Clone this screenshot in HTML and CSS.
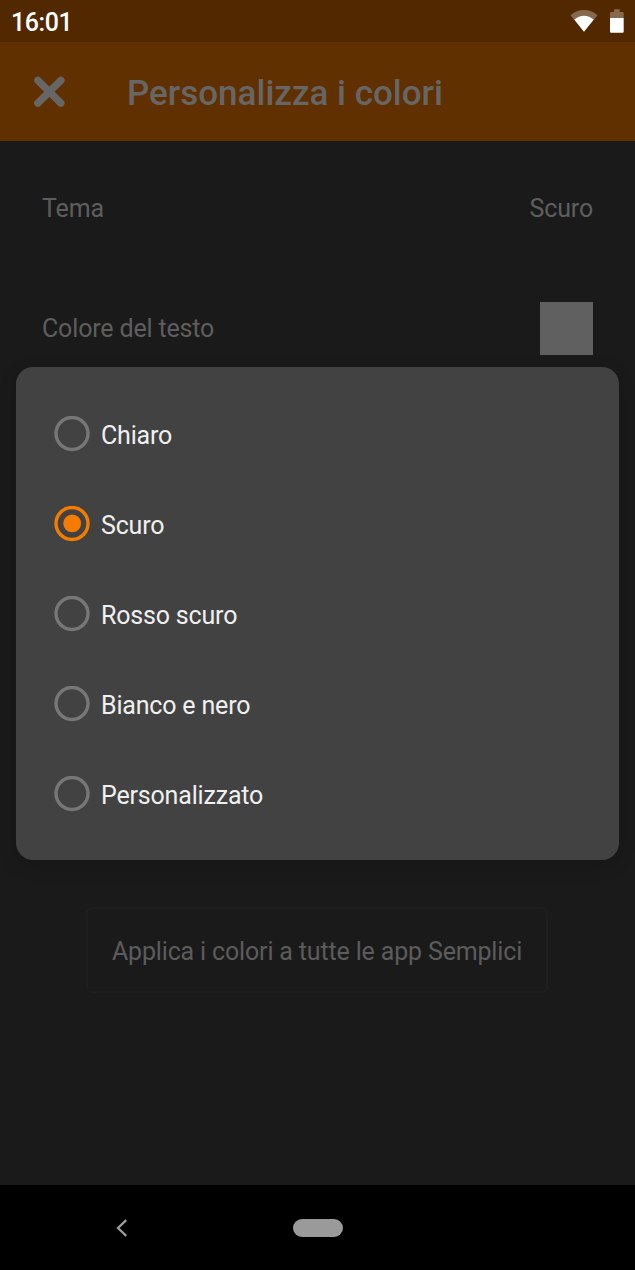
FILE: index.html
```html
<!DOCTYPE html>
<html lang="it">
<head>
<meta charset="utf-8">
<title>Personalizza i colori</title>
<link rel="stylesheet" href="styles.css">
</head>
<body>
<div class="screen">
  <header class="status-bar">
    <span class="clock">16:01</span>
    <div class="status-icons">
      <svg class="wifi" width="28" height="22" viewBox="0 0 28 22">
        <path d="M.5 5.200C8.200-1.700 19.800-1.700 27.500 5.200L14 21.700Z" fill="#fff" fill-opacity=".3"/>
        <path d="M4.300 9.600C10 4.400 18 4.400 23.700 9.600L14 21.700Z" fill="#fff"/>
      </svg>
      <svg class="battery" width="14" height="24" viewBox="0 0 14 24">
        <path d="M0 9V4.200Q0 3 1.200 3H4V.3H9.700V3H12.500Q13.700 3 13.700 4.200V9Z" fill="#fff" fill-opacity=".3"/>
        <path d="M0 9H13.700V22.600Q13.700 23.800 12.500 23.800H1.200Q0 23.800 0 22.600Z" fill="#fff"/>
      </svg>
    </div>
  </header>
  <div class="app-bar">
    <svg class="close" width="32" height="32" viewBox="0 0 32 32">
      <path d="M4.800 4.300L27.900 27.200M27.900 4.300L4.800 27.200" stroke="#666" stroke-width="7.300" stroke-linecap="round"/>
    </svg>
    <h1 class="title">Personalizza i colori</h1>
  </div>
  <main class="content">
    <div class="setting"><span class="label">Tema</span><span class="label">Scuro</span></div>
    <div class="setting"><span class="label">Colore del testo</span><span class="swatch"></span></div>
    <button class="apply">Applica i colori a tutte le app Semplici</button>
  </main>
  <nav class="nav-bar">
    <svg class="back" width="12" height="18" viewBox="0 0 12 18">
      <path d="M10.200 1.200L2 9L10.200 16.800" fill="none" stroke="#9c9c9c" stroke-width="2.300"/>
    </svg>
    <span class="home"></span>
  </nav>
  <div class="dialog" role="dialog">
    <div class="option">
      <svg class="radio" viewBox="0 0 36 36"><circle class="ring" cx="18" cy="17.500" r="16"/></svg>
      <span>Chiaro</span>
    </div>
    <div class="option">
      <svg class="radio selected" viewBox="0 0 36 36"><circle class="ring" cx="18" cy="17.500" r="16"/><circle class="dot" cx="18.200" cy="17.400" r="8.900"/></svg>
      <span>Scuro</span>
    </div>
    <div class="option">
      <svg class="radio" viewBox="0 0 36 36"><circle class="ring" cx="18" cy="17.500" r="16"/></svg>
      <span>Rosso scuro</span>
    </div>
    <div class="option">
      <svg class="radio" viewBox="0 0 36 36"><circle class="ring" cx="18" cy="17.500" r="16"/></svg>
      <span>Bianco e nero</span>
    </div>
    <div class="option">
      <svg class="radio" viewBox="0 0 36 36"><circle class="ring" cx="18" cy="17.500" r="16"/></svg>
      <span>Personalizzato</span>
    </div>
  </div>
</div>
</body>
</html>
```
FILE: styles.css
```css
* { box-sizing: border-box; }

body {
  margin: 0;
  font-family: Roboto, "Liberation Sans", sans-serif;
}

.screen {
  position: relative;
  display: flex;
  flex-direction: column;
  width: 635px;
  height: 1270px;
  overflow: hidden;
  background: #1a1a1a;
}

.status-bar {
  display: flex;
  justify-content: space-between;
  height: 42px;
  padding: 0 11px;
  background: #522800;
}

.clock {
  color: #fff;
  font-size: 25px;
  font-weight: 500;
  letter-spacing: -.4px;
  line-height: 45px;
}

.status-icons {
  display: flex;
  align-items: flex-start;
  gap: 12px;
  padding-top: 9px;
}

.wifi { margin-top: 1px; }

.app-bar {
  display: flex;
  align-items: center;
  gap: 62px;
  height: 99px;
  padding-left: 33px;
  background: #613000;
}

.close { overflow: visible; }

.title {
  margin: 4px 0 0;
  color: #666;
  font-size: 35px;
  font-weight: 500;
  line-height: 42px;
}

.content {
  display: flex;
  flex: 1;
  flex-direction: column;
  padding: 7px 42px 0;
  color: #5e5e5e;
  font-size: 25px;
  letter-spacing: -.16px;
}

.setting {
  display: flex;
  align-items: center;
  justify-content: space-between;
  height: 120px;
}

.label { padding-top: 1px; }

.swatch {
  width: 53px;
  height: 53px;
  background: #606060;
}

.apply {
  align-self: center;
  width: 462px;
  height: 86px;
  margin: 519px 1px 0 0;
  padding: 2px 0 0;
  border: 2px solid #1e1e1e;
  border-radius: 6px;
  background: none;
  color: #5c5c5c;
  font: inherit;
  letter-spacing: inherit;
  white-space: nowrap;
}

.nav-bar {
  display: flex;
  align-items: center;
  gap: 165px;
  height: 85px;
  padding-left: 116px;
  background: #000;
}

.home {
  width: 49.500px;
  height: 18px;
  border-radius: 9px;
  background: #9a9a9a;
}

.dialog {
  position: absolute;
  top: 367px;
  left: 16px;
  width: 603px;
  height: 492.500px;
  padding: 22px 38px;
  border-radius: 17px;
  background: #424242;
  box-shadow: 0 5px 18px rgba(0, 0, 0, .15);
  color: #f0f0f0;
  font-size: 25px;
  letter-spacing: -.18px;
}

.option {
  display: flex;
  align-items: center;
  gap: 11px;
  height: 90px;
}

.option span { padding-top: 2px; }

.radio {
  width: 36px;
  height: 36px;
}

.ring {
  fill: none;
  stroke: #777;
  stroke-width: 3.400;
}

.dot { fill: #f57c00; }

.selected .ring { stroke: #f57c00; }
```
